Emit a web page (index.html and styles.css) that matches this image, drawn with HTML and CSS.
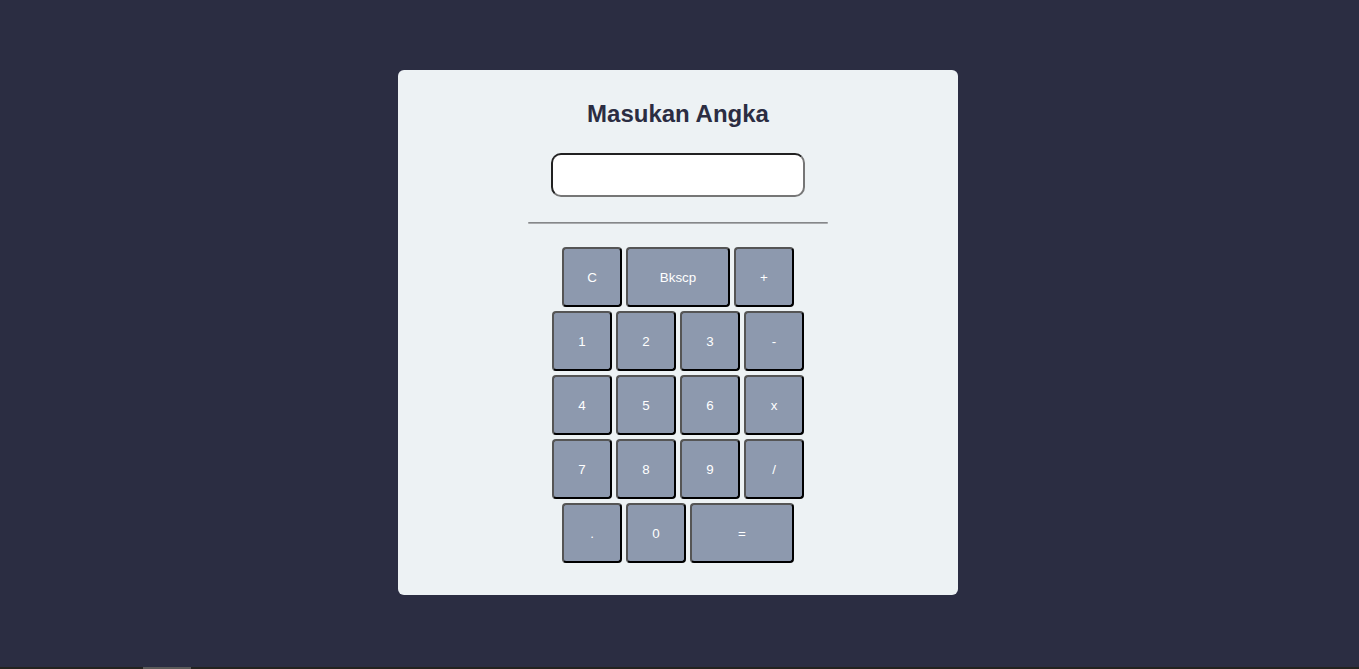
FILE: index.html
```html
<!DOCTYPE html>
<html lang="id">
<head>
<meta charset="utf-8">
<title>Kalkulator</title>
<link rel="stylesheet" href="styles.css">
</head>
<body>
<main class="page">
  <section class="card">
    <h2 class="title">Masukan Angka</h2>
    <input class="display" type="text">
    <hr class="divider">
    <div class="keys">
      <div class="row">
        <button class="key">C</button>
        <button class="key wide">Bkscp</button>
        <button class="key">+</button>
      </div>
      <div class="row">
        <button class="key">1</button>
        <button class="key">2</button>
        <button class="key">3</button>
        <button class="key">-</button>
      </div>
      <div class="row">
        <button class="key">4</button>
        <button class="key">5</button>
        <button class="key">6</button>
        <button class="key">x</button>
      </div>
      <div class="row">
        <button class="key">7</button>
        <button class="key">8</button>
        <button class="key">9</button>
        <button class="key">/</button>
      </div>
      <div class="row">
        <button class="key">.</button>
        <button class="key">0</button>
        <button class="key wide">=</button>
      </div>
    </div>
  </section>
</main>
<div class="scrollbar"><div class="thumb"></div></div>
</body>
</html>
```

FILE: styles.css
```css
html, body {
  margin: 0;
  padding: 0;
  height: 100%;
  background: #2b2d42;
  font-family: "Liberation Sans", Arial, sans-serif;
  overflow: hidden;
}

.page {
  display: flex;
  justify-content: center;
  padding-top: 70px;
  padding-right: 3px;
}

.card {
  width: 560px;
  height: 525px;
  box-sizing: border-box;
  background: #edf2f4;
  border-radius: 6px;
  display: flex;
  flex-direction: column;
  align-items: center;
  padding-top: 30px;
}

.title {
  margin: 0;
  font-size: 24px;
  font-weight: bold;
  color: #2b2d42;
  line-height: 28px;
}

.display {
  margin-top: 25px;
  width: 254px;
  height: 44px;
  box-sizing: border-box;
  border: 2px inset #767676;
  border-radius: 10px;
  background: #fff;
  padding: 0 8px;
  font-size: 16px;
}

.divider {
  width: 300px;
  height: 2px;
  margin: 25px 0 0 0;
  border: 0;
  border-radius: 1px;
  background: linear-gradient(#858789 0 50%, #a9abad 50% 100%);
}

.keys {
  margin-top: 23px;
  display: flex;
  flex-direction: column;
  align-items: center;
  gap: 4px;
}

.row {
  display: flex;
  gap: 4px;
}

.key {
  width: 60px;
  height: 60px;
  box-sizing: border-box;
  background: #8d99ae;
  color: #fff;
  border: 2px solid;
  border-color: #555 #000 #000 #555;
  border-radius: 4px;
  font-family: "Liberation Sans", Arial, sans-serif;
  font-size: 13.33px;
  padding: 0;
}

.key.wide {
  width: 104px;
}

.scrollbar {
  position: fixed;
  left: 0;
  right: 0;
  bottom: 0;
  height: 2px;
  background: #23231f;
}

.thumb {
  position: absolute;
  left: 143px;
  width: 48px;
  top: 0;
  bottom: 0;
  background: #5a5a58;
}
```
